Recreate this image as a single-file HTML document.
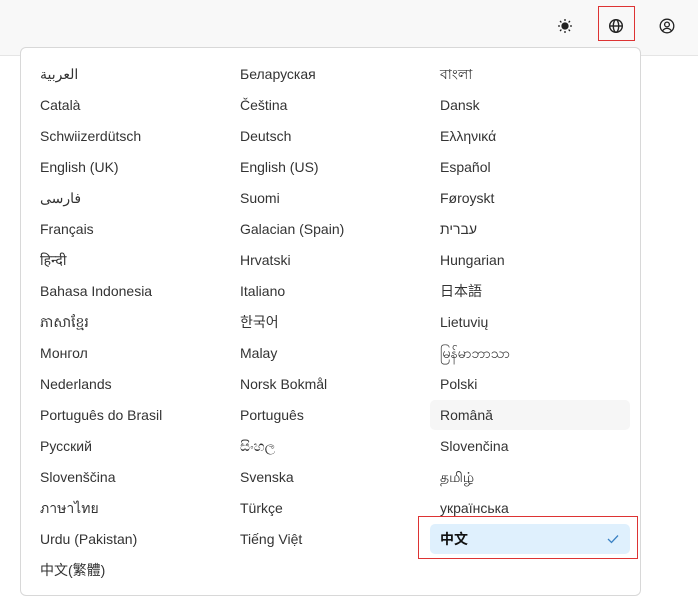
<!DOCTYPE html>
<html><head><meta charset="utf-8"><style>
body{margin:0;width:698px;height:603px;background:#fff;font-family:"Liberation Sans","Noto Sans CJK SC",sans-serif;position:relative;overflow:hidden}
.hdr{position:absolute;left:0;top:0;width:698px;height:55px;background:#f8f8f8;border-bottom:1px solid #e5e5e5}
.panel{position:absolute;left:20px;top:47px;width:619px;height:547px;background:#fff;border:1px solid #d8d8d8;border-radius:6px}
.it{position:absolute;width:200px;height:30px;line-height:30px;font-size:14px;color:#333;padding-left:10px;box-sizing:border-box;border-radius:5px}
.hov{background:#f6f6f6}
.sel{background:#dff0fd;font-weight:bold;color:#111}
.red{position:absolute;border:1px solid #d33}
svg{position:absolute}
</style></head><body>
<div class="hdr"></div>
<svg style="left:557px;top:18px" width="16" height="16" viewBox="0 0 16 16" stroke="#222" stroke-width="1.3" fill="#222"><circle cx="8" cy="8" r="3"/><path d="M8 1v2M8 13v2M1 8h2M13 8h2M3 3l1.4 1.4M11.6 11.6L13 13M3 13l1.4-1.4M11.6 4.4L13 3"/></svg>
<div class="red" style="left:598px;top:6px;width:35px;height:33px"></div>
<svg style="left:608px;top:18px" width="16" height="16" viewBox="0 0 16 16" fill="none" stroke="#222" stroke-width="1.4"><circle cx="8" cy="8" r="6.3"/><ellipse cx="8" cy="8" rx="2.7" ry="6.3"/><path d="M1.7 8h12.6"/></svg>
<svg style="left:659px;top:18px" width="16" height="16" viewBox="0 0 16 16" fill="none" stroke="#222" stroke-width="1.3"><circle cx="8" cy="8" r="6.8"/><circle cx="8" cy="6.5" r="2.4"/><path d="M3.5 13c1.2-2 2.8-2.6 4.5-2.6s3.3.6 4.5 2.6"/></svg>
<div class="panel"></div>
<div id="items"></div>
<div class="red" style="left:418px;top:516px;width:218px;height:41px"></div>
<script>
var cols=[["العربية","Català","Schwiizerdütsch","English (UK)","فارسی","Français","हिन्दी","Bahasa Indonesia","ភាសាខ្មែរ","Монгол","Nederlands","Português do Brasil","Русский","Slovenščina","ภาษาไทย","Urdu (Pakistan)","中文(繁體)"],
["Беларуская","Čeština","Deutsch","English (US)","Suomi","Galacian (Spain)","Hrvatski","Italiano","한국어","Malay","Norsk Bokmål","Português","සිංහල","Svenska","Türkçe","Tiếng Việt"],
["বাংলা","Dansk","Ελληνικά","Español","Føroyskt","עברית","Hungarian","日本語","Lietuvių","မြန်မာဘာသာ","Polski","Română","Slovenčina","தமிழ்","українська","中文"]];
var h="";
cols.forEach(function(c,ci){c.forEach(function(t,ri){var cls="it";if(ci==2&&ri==11)cls+=" hov";if(ci==2&&ri==15)cls+=" sel";
h+='<div class="'+cls+'" style="left:'+(30+ci*200)+'px;top:'+(59+ri*31)+'px">'+t+(ci==2&&ri==15?'<svg style="left:177px;top:10px" width="12" height="10" viewBox="0 0 12 10" fill="none" stroke="#3b82c4" stroke-width="1.3"><path d="M1 5l3.5 3.5L11 1.5"/></svg>':'')+'</div>';});});
document.getElementById("items").innerHTML=h;
</script>
</body></html>
